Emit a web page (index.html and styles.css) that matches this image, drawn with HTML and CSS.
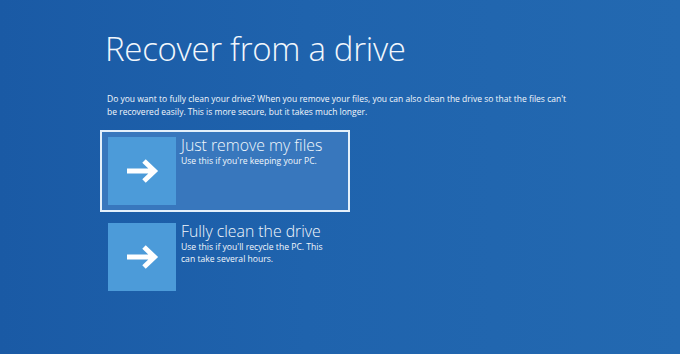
FILE: index.html
```html
<!DOCTYPE html>
<html lang="en">
<head>
  <meta charset="UTF-8">
  <meta name="viewport" content="width=device-width, initial-scale=1.0">
  <title>Recover from a drive</title>
  <link rel="stylesheet" href="styles.css">
</head>
<body>
  <main class="page">
    <h1 class="title">Recover from a drive</h1>
    <p class="intro">Do you want to fully clean your drive? When you remove your files, you can also clean the drive so that the files can't be recovered easily. This is more secure, but it takes much longer.</p>

    <div class="options">
      <button class="option selected">
        <span class="option-icon">
          <svg width="34" height="26" viewBox="0 0 34 26">
            <path d="M2 13 H29 M19 3 L29.5 13 L19 23" fill="none" stroke="#fff" stroke-width="5"/>
          </svg>
        </span>
        <span class="option-text">
          <span class="option-title">Just remove my files</span>
          <span class="option-desc">Use this if you're keeping your PC.</span>
        </span>
      </button>

      <button class="option">
        <span class="option-icon">
          <svg width="34" height="26" viewBox="0 0 34 26">
            <path d="M2 13 H29 M19 3 L29.5 13 L19 23" fill="none" stroke="#fff" stroke-width="5"/>
          </svg>
        </span>
        <span class="option-text">
          <span class="option-title">Fully clean the drive</span>
          <span class="option-desc">Use this if you'll recycle the PC. This can take several hours.</span>
        </span>
      </button>
    </div>
  </main>
</body>
</html>
```

FILE: styles.css
```css
body, html {
  margin: 0;
  padding: 0;
  height: 100%;
  overflow: hidden;
  font-family: "Open Sans", "Liberation Sans", sans-serif;
  color: #fff;
  background: linear-gradient(to right, #1a5aa5 0%, #1f63ad 45%, #2369b1 100%);
}

.page {
  padding: 26px 0 0 105px;
}

.title {
  margin: 0;
  font-size: 33px;
  font-weight: 300;
  letter-spacing: -0.3px;
  line-height: 46px;
  color: #f2f7fc;
}

.intro {
  margin: 20px 0 0 2px;
  max-width: 468px;
  font-size: 8.5px;
  line-height: 13px;
  color: #f2f7fc;
}

.options {
  display: flex;
  flex-direction: column;
  gap: 4px;
  margin: 12px 0 0 -5px;
}

.option {
  display: flex;
  align-items: flex-start;
  gap: 5px;
  width: 250px;
  padding: 5px 6px;
  border: 2px solid transparent;
  background: none;
  color: inherit;
  font: inherit;
  text-align: left;
  cursor: pointer;
}

.option.selected {
  border-color: #e4f0fb;
  background-color: #3877bd;
}

.option-icon {
  flex: none;
  display: flex;
  justify-content: center;
  align-items: center;
  width: 68px;
  height: 68px;
  background-color: #4c9bd9;
}

.option-text {
  display: flex;
  flex-direction: column;
}

.option-title {
  font-size: 15.8px;
  font-weight: 300;
  line-height: 16px;
  color: #f2f7fc;
}

.option-desc {
  margin-top: 2px;
  max-width: 150px;
  font-size: 8.6px;
  line-height: 12px;
  color: #f2f7fc;
}
```
